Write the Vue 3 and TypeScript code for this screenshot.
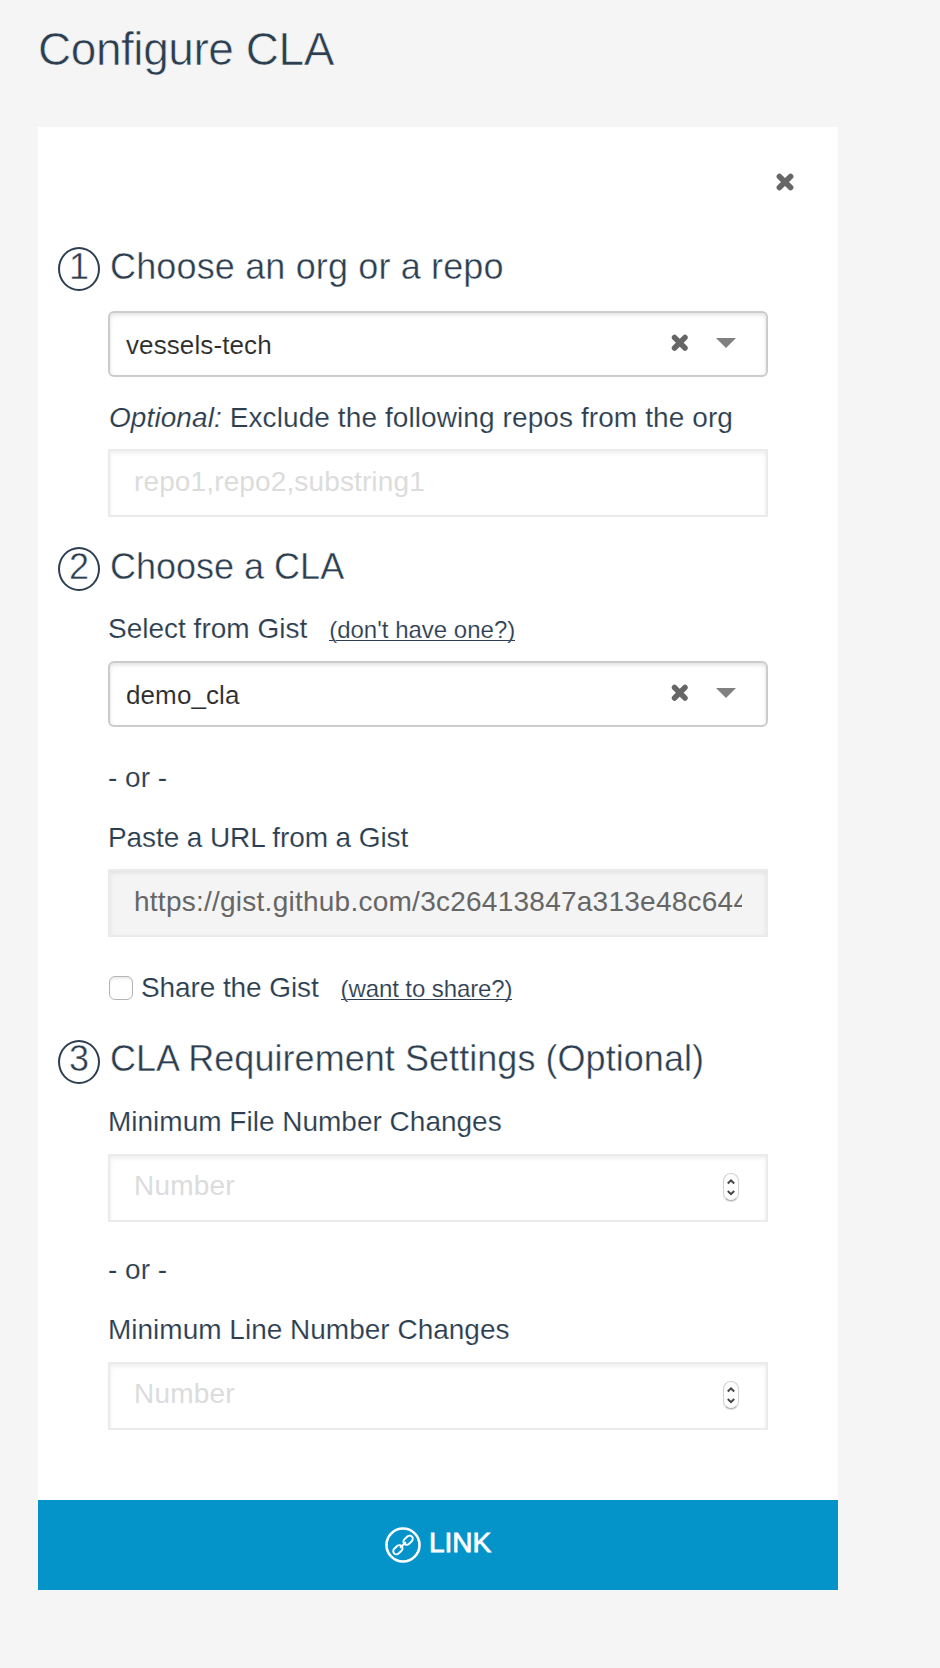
<script setup lang="ts">
import { ref } from 'vue'

const org = ref('vessels-tech')
const gist = ref('demo_cla')
const excluded = ref('')
const gistUrl = ref('https://gist.github.com/3c26413847a313e48c6441bc7d6873e5')
const shareGist = ref(false)
const minFiles = ref('')
const minLines = ref('')
</script>

<template>
  <main class="page">
    <h1 class="title">Configure CLA</h1>
    <section class="panel">
      <div class="close-row">
        <svg class="close" viewBox="0 0 18 18"><path d="M3.4 3.4 14.6 14.6M14.6 3.4 3.4 14.6" /></svg>
      </div>

      <h2 class="step"><span class="num">1</span><span class="step-text s1">Choose an org or a repo</span></h2>
      <div class="select first">
        <span class="value">{{ org }}</span>
        <svg class="clear" viewBox="0 0 18 18"><path d="M3.6 3.6 14.4 14.4M14.4 3.6 3.6 14.4" /></svg>
        <svg class="caret" viewBox="0 0 20 10"><path d="M0 0H20L10 10Z" /></svg>
      </div>
      <div class="label exclude"><em>Optional:</em> Exclude the following repos from the org</div>
      <div class="field repos"><input v-model="excluded" type="text" placeholder="repo1,repo2,substring1" /></div>

      <h2 class="step second"><span class="num">2</span><span class="step-text">Choose a CLA</span></h2>
      <div class="label after-step">Select from Gist<a class="hint">(don't have one?)</a></div>
      <div class="select">
        <span class="value">{{ gist }}</span>
        <svg class="clear" viewBox="0 0 18 18"><path d="M3.6 3.6 14.4 14.4M14.4 3.6 3.6 14.4" /></svg>
        <svg class="caret" viewBox="0 0 20 10"><path d="M0 0H20L10 10Z" /></svg>
      </div>
      <div class="label or">- or -</div>
      <div class="label after-or paste">Paste a URL from a Gist</div>
      <div class="field filled"><input v-model="gistUrl" type="text" readonly /></div>
      <div class="label share">
        <input v-model="shareGist" class="check" type="checkbox" />
        <div>Share the Gist<a class="hint want">(want to share?)</a></div>
      </div>

      <h2 class="step third"><span class="num">3</span><span class="step-text s3">CLA Requirement Settings (Optional)</span></h2>
      <div class="label after-step">Minimum File Number Changes</div>
      <div class="field number">
        <input v-model="minFiles" type="text" placeholder="Number" />
        <span class="spin"><svg viewBox="0 0 14 26"><path d="M3.8 9.5 7 6.4 10.2 9.5M3.8 17 7 20.1 10.2 17" /></svg></span>
      </div>
      <div class="label or low">- or -</div>
      <div class="label after-or">Minimum Line Number Changes</div>
      <div class="field number">
        <input v-model="minLines" type="text" placeholder="Number" />
        <span class="spin"><svg viewBox="0 0 14 26"><path d="M3.8 9.5 7 6.4 10.2 9.5M3.8 17 7 20.1 10.2 17" /></svg></span>
      </div>

      <button class="submit" type="button">
        <svg class="link-icon" viewBox="0 0 36 36">
          <circle cx="18" cy="18" r="16.5" />
          <g transform="rotate(-43 18 18)">
            <rect x="5.8" y="14.8" width="10.4" height="6.4" rx="3.2" />
            <rect x="19.8" y="14.8" width="10.4" height="6.4" rx="3.2" />
            <path d="M14 18H22" />
          </g>
        </svg>
        <span>LINK</span>
      </button>
    </section>
  </main>
</template>

<style>
body {
  margin: 0;
  background: #f5f5f5;
}
</style>

<style scoped>
.page {
  box-sizing: border-box;
  height: 1668px;
  padding: 24px 102px 0 38px;
  background: #f5f5f5;
  color: #2c3e50;
  font-family: "Liberation Sans", Arial, sans-serif;
}
.title {
  margin: 0;
  height: 103px;
  font-size: 46px;
  font-weight: 400;
  line-height: 51px;
  letter-spacing: -0.45px;
  -webkit-text-stroke: 0.6px #f5f5f5;
}
.panel {
  display: flex;
  flex-direction: column;
  height: 1463px;
  background: #fff;
}
.close-row {
  display: flex;
  justify-content: flex-end;
  height: 74px;
  padding: 46px 44px 0 0;
}
.close {
  width: 18px;
  height: 18px;
}
.close path,
.clear path {
  fill: none;
  stroke: #666;
  stroke-width: 5.6;
  stroke-linecap: round;
}
.step {
  display: flex;
  align-items: flex-start;
  gap: 10px;
  height: 44px;
  margin: 0 0 0 20px;
  font-size: 36px;
  font-weight: 400;
  line-height: 39px;
  -webkit-text-stroke: 0.4px #fff;
}
.num {
  box-sizing: border-box;
  width: 42px;
  height: 44px;
  border: 2px solid #2c3e50;
  border-radius: 50%;
  line-height: 35px;
  text-align: center;
}
.s1 {
  letter-spacing: 0.15px;
}
.s3 {
  letter-spacing: 0.05px;
}
.second {
  margin-top: 30px;
}
.third {
  margin-top: 37px;
  line-height: 38px;
}
.third .num {
  line-height: 34px;
}
.select {
  display: flex;
  align-items: center;
  box-sizing: border-box;
  height: 66px;
  margin: 17px 70px 0;
  padding: 0 30px 0 16px;
  border: 2px solid #ccc;
  border-radius: 6px;
  box-shadow: inset 0 2px 4px rgba(0, 0, 0, 0.12);
  color: #2c2c2c;
  font-size: 26px;
}
.first {
  margin-top: 20px;
}
.value {
  flex: 1;
  padding-top: 3px;
  letter-spacing: 0.1px;
  -webkit-text-stroke: 0.1px #fff;
}
.clear {
  width: 17.5px;
  height: 17.5px;
  margin: 0 28px 2px 0;
}
.caret {
  width: 20px;
  height: 10px;
  margin-bottom: 2px;
  fill: #808080;
}
.label {
  height: 32px;
  margin-left: 70px;
  font-size: 28px;
  line-height: 34px;
  white-space: nowrap;
  -webkit-text-stroke: 0.15px #fff;
}
.exclude {
  margin-top: 24px;
  padding-left: 1px;
  letter-spacing: 0.09px;
}
.after-step {
  margin-top: 21px;
}
.or {
  margin-top: 34px;
}
.low {
  margin-top: 31px;
}
.after-or {
  margin-top: 28px;
}
.paste {
  letter-spacing: -0.1px;
}
.share {
  display: flex;
  margin-top: 34px;
  letter-spacing: -0.1px;
}
.hint {
  display: inline-block;
  margin-left: 22px;
  border-bottom: 1px solid #2c3e50;
  font-size: 24px;
  line-height: 21px;
}
.want {
  letter-spacing: -0.1px;
}
.check {
  appearance: none;
  width: 24px;
  height: 24px;
  margin: 5px 8px 0 1px;
  border: 1.5px solid #b4b4b4;
  border-radius: 6px;
  background: #fff;
  box-shadow: inset 0 2px 2px rgba(0, 0, 0, 0.08);
}
.field {
  display: flex;
  align-items: center;
  box-sizing: border-box;
  height: 68px;
  margin: 17px 70px 0;
  padding: 0 24px;
  border: 2px solid #ebebeb;
  box-shadow: inset 0 2px 4px rgba(0, 0, 0, 0.08);
}
.exclude + .field,
.filled {
  margin-top: 16px;
}
.filled {
  background: #f4f4f4;
}
.field input {
  flex: 1;
  min-width: 0;
  height: 34px;
  margin: 0 0 4px;
  padding: 0;
  border: 0;
  outline: 0;
  background: transparent;
  color: #666;
  font: 28px "Liberation Sans", Arial, sans-serif;
}
.field.filled input {
  margin-bottom: 2px;
  letter-spacing: 0.25px;
}
.field.repos input {
  margin-bottom: 2px;
  letter-spacing: 0.13px;
}
.number input {
  letter-spacing: 0.2px;
}
.field input::placeholder {
  color: #dcdcdc;
  opacity: 1;
}
.spin {
  box-sizing: border-box;
  width: 16px;
  height: 28px;
  margin: 0 3px 2px 0;
  border: 1px solid #d2d2d2;
  border-bottom-color: #aaa;
  border-radius: 8px;
  box-shadow: 0 1px 1px rgba(0, 0, 0, 0.15);
}
.spin svg {
  display: block;
  width: 14px;
  height: 26px;
  fill: none;
  stroke: #444;
  stroke-width: 2;
}
.submit {
  display: flex;
  align-items: center;
  justify-content: center;
  gap: 8px;
  height: 90px;
  margin-top: auto;
  padding: 0;
  border: 0;
  background: #0594c9;
  color: #fff;
  font: 28px "Liberation Sans", Arial, sans-serif;
}
.submit span {
  margin-bottom: 5px;
  -webkit-text-stroke: 0.8px #fff;
}
.link-icon {
  width: 36px;
  height: 36px;
  fill: none;
  stroke: #fff;
  stroke-width: 2.6;
}
.link-icon g {
  stroke-width: 1.9;
}
</style>
